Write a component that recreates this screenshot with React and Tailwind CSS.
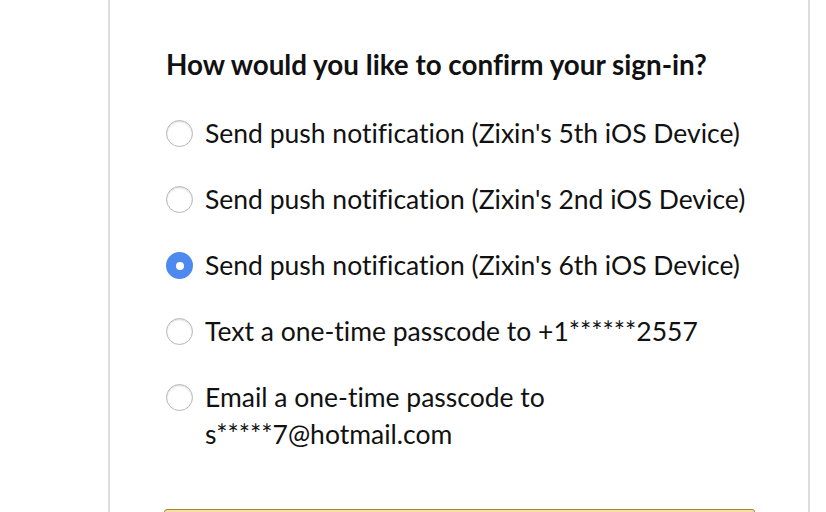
import React from "react";

const options = [
  ["Send push notification (Zixin's 5th iOS Device)"],
  ["Send push notification (Zixin's 2nd iOS Device)"],
  ["Send push notification (Zixin's 6th iOS Device)", true],
  ["Text a one-time passcode to +1******2557"],
  ["Email a one-time passcode to", false, "s*****7@hotmail.com"],
];

function Radio({ checked }) {
  if (checked) {
    return (
      <div className="flex h-[27px] w-[27px] shrink-0 items-center justify-center rounded-full bg-[#4d8af0]">
        <div className="h-[8px] w-[8px] rounded-full bg-white" />
      </div>
    );
  }
  return (
    <div className="h-[27px] w-[27px] shrink-0 rounded-full border border-[#b8b8b8] bg-white shadow-[inset_0_1px_2px_rgba(0,0,0,0.15)]" />
  );
}

export default function App() {
  return (
    <div className="h-[512px] w-[826px] overflow-hidden bg-white [font-variant-ligatures:none]" style={{ fontFamily: 'Lato, sans-serif' }}>
      <div className="ml-[108px] h-full w-[702px] border-x-2 border-[#dddddd] pl-[56px] pt-[47px]">
        <h1 className="text-[27.8px] font-bold leading-[36px] text-[#111111]">
          How would you like to confirm your sign-in?
        </h1>
        <div className="mt-[32px] flex flex-col gap-[29px]">
          {options.map(([label, checked, second], i) => (
            <div key={i} className="flex items-start gap-[12px] text-[26.5px] leading-[37px] text-[#111111]">
              <div className="mt-[5px]">
                <Radio checked={checked} />
              </div>
              <div>
                <div>{label}</div>
                {second && <div>{second}</div>}
              </div>
            </div>
          ))}
        </div>
        <div className="-ml-[2px] mt-[56px] h-[40px] w-[591px] rounded-[3px] border border-[#a88734] bg-gradient-to-b from-[#f7dfa5] to-[#f0c14b]" />
      </div>
    </div>
  );
}
